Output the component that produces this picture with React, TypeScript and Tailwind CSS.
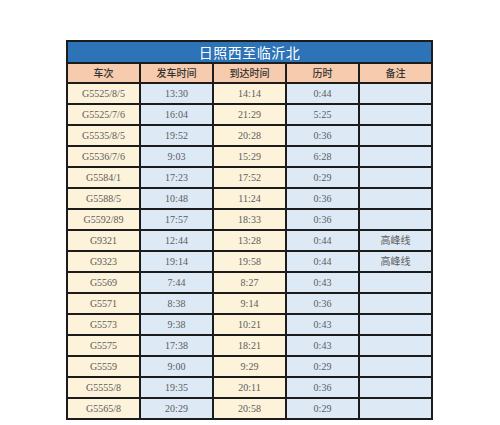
import React from 'react';

const rows: [string, string, string, string, string][] = [
  ['G5525/8/5', '13:30', '14:14', '0:44', ''],
  ['G5525/7/6', '16:04', '21:29', '5:25', ''],
  ['G5535/8/5', '19:52', '20:28', '0:36', ''],
  ['G5536/7/6', '9:03', '15:29', '6:28', ''],
  ['G5584/1', '17:23', '17:52', '0:29', ''],
  ['G5588/5', '10:48', '11:24', '0:36', ''],
  ['G5592/89', '17:57', '18:33', '0:36', ''],
  ['G9321', '12:44', '13:28', '0:44', '高峰线'],
  ['G9323', '19:14', '19:58', '0:44', '高峰线'],
  ['G5569', '7:44', '8:27', '0:43', ''],
  ['G5571', '8:38', '9:14', '0:36', ''],
  ['G5573', '9:38', '10:21', '0:43', ''],
  ['G5575', '17:38', '18:21', '0:43', ''],
  ['G5559', '9:00', '9:29', '0:29', ''],
  ['G5555/8', '19:35', '20:11', '0:36', ''],
  ['G5565/8', '20:29', '20:58', '0:29', ''],
];

const headers = ['车次', '发车时间', '到达时间', '历时', '备注'];
const colBg = ['bg-[#fdf2da]', 'bg-[#dde9f5]', 'bg-[#fdf2da]', 'bg-[#dde9f5]', 'bg-[#dde9f5]'];

export default function App() {
  return (
    <div className="w-[500px] h-[425px] bg-white pt-[40px] pl-[66px]">
      <table className="w-[367px] table-fixed border-collapse border-2 border-[#1c1c1c]">
        <thead>
          <tr className="h-[22px]">
            <th
              colSpan={5}
              className="bg-[#2c73b8] border-2 border-[#1c1c1c] text-white text-[14px] font-normal leading-none tracking-[0.5px]"
              style={{ fontFamily: '"Noto Sans CJK SC", sans-serif' }}
            >
              日照西至临沂北
            </th>
          </tr>
          <tr className="h-[20px]">
            {headers.map((h) => (
              <th
                key={h}
                className="bg-[#f7cbad] border-2 border-[#1c1c1c] text-[#333] text-[10px] font-medium leading-none"
                style={{ fontFamily: '"Noto Sans CJK SC", sans-serif' }}
              >
                {h}
              </th>
            ))}
          </tr>
        </thead>
        <tbody>
          {rows.map((r) => (
            <tr key={r[0]} className="h-[21px]">
              {r.map((c, i) => (
                <td
                  key={i}
                  className={`${colBg[i]} border-2 border-[#1c1c1c] text-center text-[#5c5c5c] text-[10px] leading-none p-0`}
                  style={{ fontFamily: '"Liberation Serif", "Noto Sans CJK SC", serif' }}
                >
                  {c}
                </td>
              ))}
            </tr>
          ))}
        </tbody>
      </table>
    </div>
  );
}
